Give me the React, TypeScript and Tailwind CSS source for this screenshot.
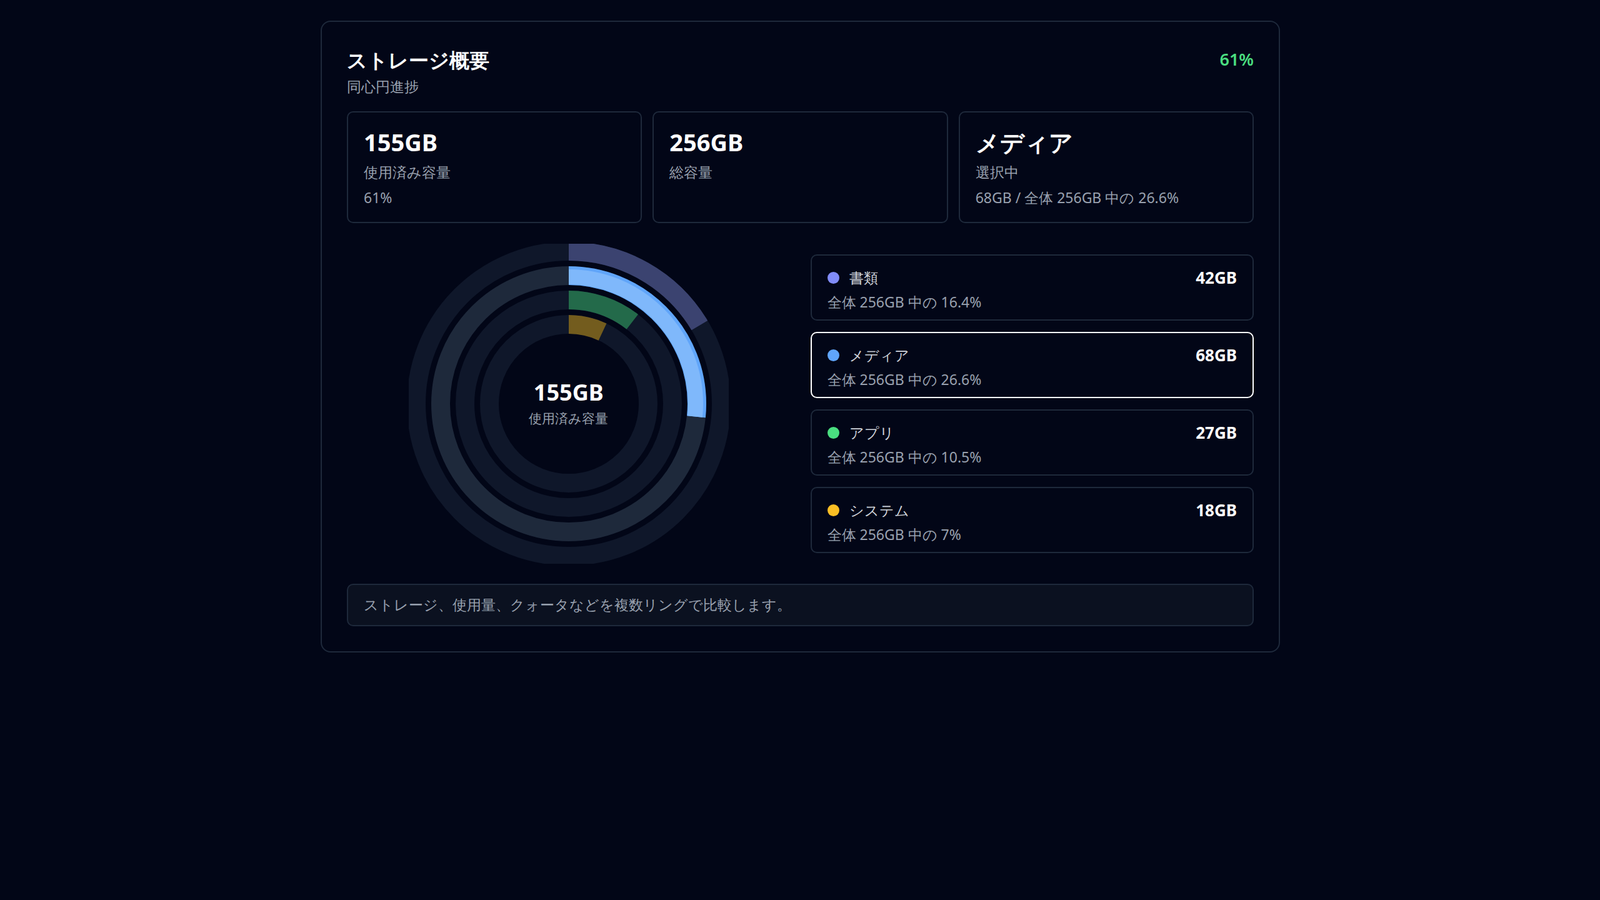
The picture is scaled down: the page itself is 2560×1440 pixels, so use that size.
const rings = [
  { name: "書類", gb: 42, pct: 16.4, dot: "bg-[#818cf8]", arc: "#3b4370", r: 244 },
  { name: "メディア", gb: 68, pct: 26.6, dot: "bg-[#60a5fa]", arc: "#60a5fa", r: 205 },
  { name: "アプリ", gb: 27, pct: 10.5, dot: "bg-[#4ade80]", arc: "#236a4a", r: 166 },
  { name: "システム", gb: 18, pct: 7, dot: "bg-[#fbbf24]", arc: "#735c1e", r: 127 },
];

function Ring() {
  const c = 256;
  return (
    <div className="relative w-[512px] h-[512px]">
      <svg width="512" height="512" viewBox="0 0 512 512">
        {rings.map((r, i) => {
          const len = 2 * Math.PI * r.r;
          const selected = i === 1;
          return (
            <g key={i} transform={`rotate(-90 ${c} ${c})`}>
              <circle cx={c} cy={c} r={r.r} fill="none" stroke={selected ? "#1e293b" : "#0f172a"} strokeWidth={30} />
              <circle cx={c} cy={c} r={r.r} fill="none" stroke={r.arc} strokeWidth={30}
                strokeDasharray={`${(len * r.pct) / 100} ${len}`} />
              {selected && (
                <circle cx={c} cy={c} r={r.r - 2} fill="none" stroke="#7fb8fb" strokeWidth={24}
                  strokeDasharray={`${(2 * Math.PI * (r.r - 2) * r.pct) / 100} ${len}`} />
              )}
            </g>
          );
        })}
      </svg>
      <div className="absolute inset-0 flex flex-col items-center justify-center">
        <p className="text-[36px] font-bold text-white leading-tight">155GB</p>
        <p className="text-[21px] text-gray-400 mt-1">使用済み容量</p>
      </div>
    </div>
  );
}

export default function App() {
  return (
    <div className="min-h-screen bg-[#020617] pt-[33px] font-['Inter','Noto_Sans_CJK_JP',sans-serif]">
      <div className="w-[1535px] ml-[513px] rounded-[16px] border-2 border-[#1e293b] p-[40px] pt-[38px]">
        <div className="flex justify-between items-start">
          <div>
            <h1 className="text-[32px] font-bold text-white leading-[46px]">ストレージ概要</h1>
            <p className="text-[23px] text-gray-400 mt-[2px]">同心円進捗</p>
          </div>
          <span className="text-[27px] font-semibold text-[#4ade80] mt-[2px]">61%</span>
        </div>

        <div className="grid grid-cols-3 gap-[17px] mt-[22px]">
          {[
            { v: "155GB", l: "使用済み容量", s: "61%" },
            { v: "256GB", l: "総容量", s: "" },
            { v: "メディア", l: "選択中", s: "68GB / 全体 256GB 中の 26.6%" },
          ].map((s, i) => (
            <div key={i} className="h-[179px] rounded-[10px] border-2 border-[#1e293b] px-[25px] pt-[22px]">
              <p className="text-[38px] font-bold text-white leading-[50px]">{s.v}</p>
              <p className="text-[23px] text-gray-400 mt-[6px] leading-[34px]">{s.l}</p>
              {s.s && <p className="text-[23px] text-gray-400 mt-[7px] leading-[34px]">{s.s}</p>}
            </div>
          ))}
        </div>

        <div className="grid grid-cols-2 gap-[32px] mt-[33px] items-center">
          <div className="flex justify-center">
            <Ring />
          </div>
          <div className="flex flex-col gap-[18px]">
            {rings.map((r, i) => (
              <div key={i}
                className={`h-[106px] rounded-[10px] border-2 px-[25px] pt-[16px] ${i === 1 ? "border-white" : "border-[#1e293b]"}`}>
                <div className="flex justify-between items-center">
                  <div className="flex items-center gap-[16px]">
                    <span className={`w-[19px] h-[19px] rounded-full ${r.dot}`} />
                    <span className="text-[23px] text-gray-300">{r.name}</span>
                  </div>
                  <span className="text-[26px] font-bold text-white">{r.gb}GB</span>
                </div>
                <p className="text-[23px] text-gray-400 mt-[2px]">全体 256GB 中の {r.pct}%</p>
              </div>
            ))}
          </div>
        </div>

        <div className="mt-[32px] h-[68px] rounded-[10px] border-2 border-[#1e293b] bg-[#0b1120] px-[25px] flex items-center">
          <p className="text-[23px] text-gray-400">ストレージ、使用量、クォータなどを複数リングで比較します。</p>
        </div>
      </div>
    </div>
  );
}
